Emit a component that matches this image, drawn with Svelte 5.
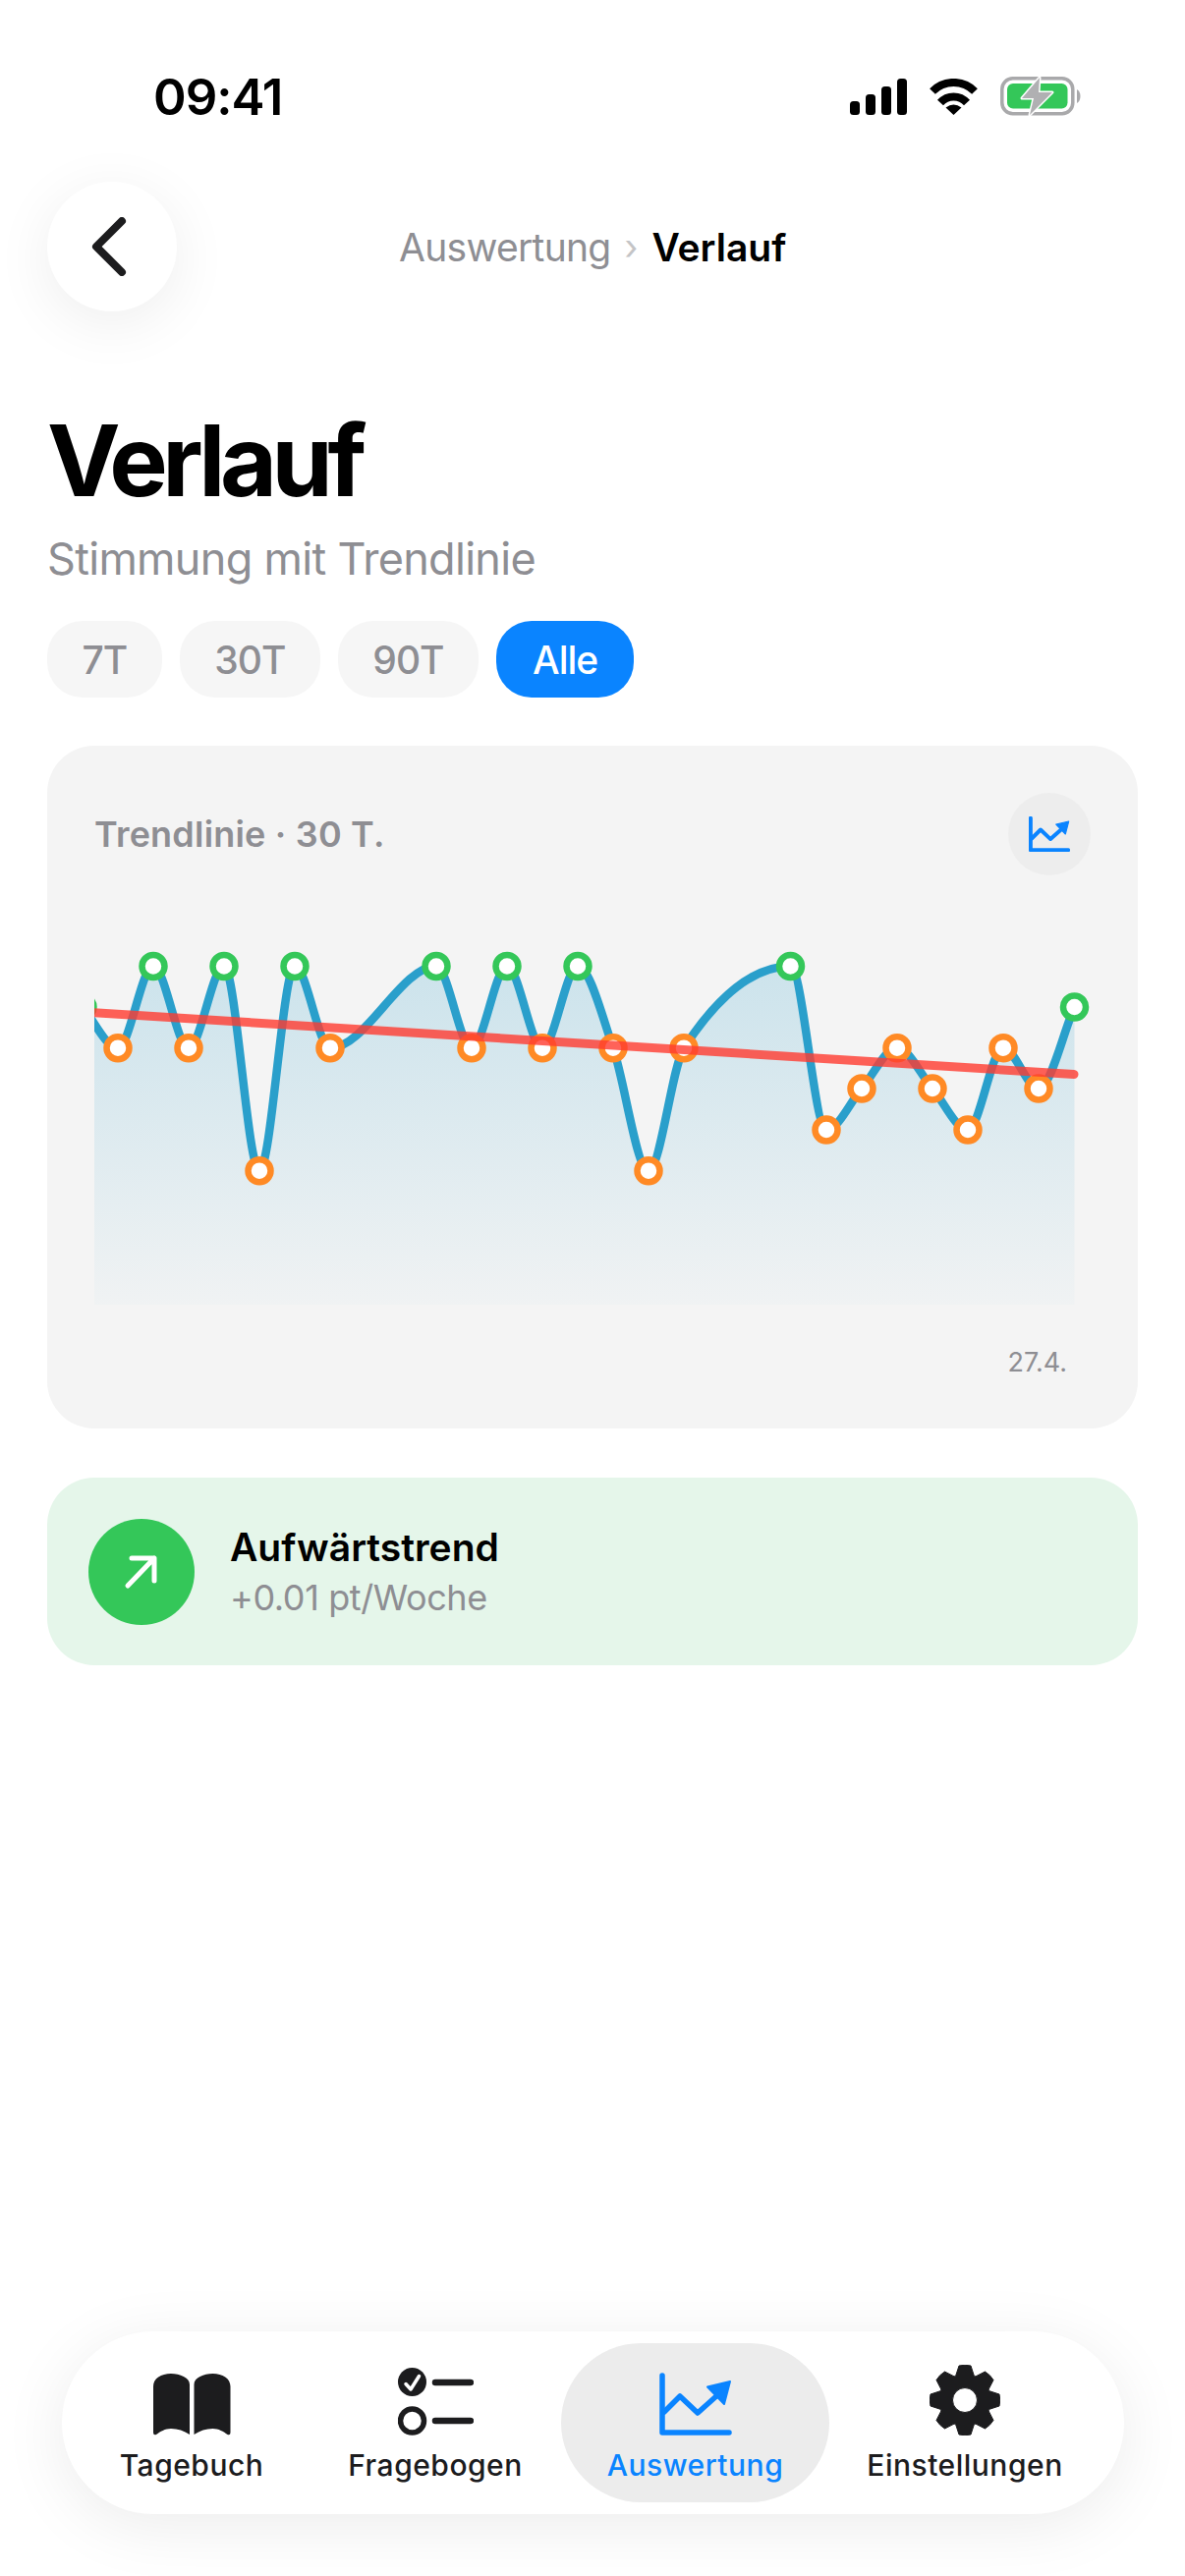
<script lang="ts">
	// chart values in page pixels, x is relative to the svg's left edge (96)
	const pts = [
		[-12, 1025], [24, 1066.7], [60, 983.5], [96, 1066.7], [132, 983.5], [168, 1191.7], [204, 983.5], [240, 1066.7],
		[348, 983.5], [384, 1066.7], [420, 983.5], [456, 1066.7], [492, 983.5], [528, 1066.7], [564, 1191.7], [600, 1066.7],
		[708.5, 983.5], [745, 1150], [781, 1108], [817, 1066.7], [853, 1108], [889, 1150], [925, 1066.7], [961, 1108], [997.5, 1025]
	].map(([x, y]) => ({ x, y: y - 950 }));

	function monotone(p: { x: number; y: number }[]) {
		const n = p.length;
		const sl: number[] = [];
		for (let i = 0; i < n - 1; i++) sl.push((p[i + 1].y - p[i].y) / (p[i + 1].x - p[i].x));
		const t = p.map((_, i) => {
			if (i === 0) return sl[0];
			if (i === n - 1) return sl[n - 2];
			if (sl[i - 1] * sl[i] <= 0) return 0;
			const h0 = p[i].x - p[i - 1].x;
			const h1 = p[i + 1].x - p[i].x;
			const m = (sl[i - 1] * h1 + sl[i] * h0) / (h0 + h1);
			return Math.sign(sl[i]) * Math.min(Math.abs(sl[i - 1]), Math.abs(sl[i]), Math.abs(m) / 2) * 2;
		});
		let d = `M${p[0].x} ${p[0].y}`;
		for (let i = 0; i < n - 1; i++) {
			const h = (p[i + 1].x - p[i].x) / 3;
			d += `C${p[i].x + h} ${p[i].y + t[i] * h} ${p[i + 1].x - h} ${p[i + 1].y - t[i + 1] * h} ${p[i + 1].x} ${p[i + 1].y}`;
		}
		return d;
	}

	const line = monotone(pts);
	const area = `${line}V378H-12Z`;

	function gear() {
		const teeth = 8;
		const c = 36;
		let d = '';
		for (let i = 0; i < teeth; i++) {
			const a = (i * Math.PI * 2) / teeth - Math.PI / 2;
			const at = (r: number, o: number) => `${(c + r * Math.cos(a + o)).toFixed(1)} ${(c + r * Math.sin(a + o)).toFixed(1)}`;
			d += `${i ? 'L' : 'M'}${at(26.5, -0.36)}L${at(35.5, -0.17)}Q${at(36.5, 0)} ${at(35.5, 0.17)}L${at(26.5, 0.36)}`;
		}
		return `${d}ZM36 23.5a12.5 12.5 0 1 0 0 25a12.5 12.5 0 1 0 0-25Z`;
	}

	const chips = ['7T', '30T', '90T', 'Alle'];
</script>

{#snippet chartIcon(sw: number)}
	<path d="M3 3V61H71" fill="none" stroke="currentColor" stroke-width={sw} stroke-linecap="round" stroke-linejoin="round" />
	<path d="M5 40L21 24L39 41L58 24" fill="none" stroke="currentColor" stroke-width={sw} stroke-linecap="round" stroke-linejoin="round" />
	<path d="M72 9L49 14.5L66 32Z" fill="currentColor" stroke="currentColor" stroke-width="2" stroke-linejoin="round" />
{/snippet}

<div class="page">
	<div class="status">
		<span class="time">09:41</span>
		<div class="status-icons">
			<svg width="58" height="37" viewBox="0 0 58 37">
				<rect x="0" y="23" width="10" height="14" rx="3.5" />
				<rect x="16" y="16" width="10" height="21" rx="3.5" />
				<rect x="32" y="8" width="10" height="29" rx="3.5" />
				<rect x="48" y="0" width="10" height="37" rx="3.5" />
			</svg>
			<svg width="49" height="37" viewBox="0 0 49 37">
				<path d="M3 13A30 30 0 0 1 46 13" fill="none" stroke="#000" stroke-width="8" />
				<path d="M11 24.5A18 18 0 0 1 38 24.5" fill="none" stroke="#000" stroke-width="8" />
				<path d="M24.5 37L16.5 29.5Q24.5 23.5 32.5 29.5Z" />
			</svg>
			<svg width="82" height="42" viewBox="0 0 82 42">
				<rect x="1.8" y="2.8" width="72" height="36" rx="11" fill="none" stroke="#a9a9ab" stroke-width="3.5" />
				<rect x="7" y="8" width="61.5" height="25.5" rx="6" fill="#34c759" />
				<path d="M78 14Q81.5 16 81.5 21Q81.5 26 78 28Z" fill="#a9a9ab" />
				<path d="M40 2L22 23H34L30 40L53 17H39Z" fill="#b0b0b2" stroke="#fff" stroke-width="3" stroke-linejoin="round" paint-order="stroke" />
			</svg>
		</div>
	</div>

	<div class="nav">
		<button class="back" aria-label="Zurück">
			<svg width="36" height="60" viewBox="0 0 36 60">
				<path d="M31 4L5 30L31 56" fill="none" stroke="#1c1c1e" stroke-width="8" stroke-linecap="round" stroke-linejoin="round" />
			</svg>
		</button>
		<div class="crumbs">
			<span class="crumb-parent">Auswertung</span>
			<span class="crumb-sep">›</span>
			<span class="crumb-current">Verlauf</span>
		</div>
	</div>

	<h1>Verlauf</h1>
	<p class="subtitle">Stimmung mit Trendlinie</p>

	<div class="chips">
		{#each chips as chip}
			<span class="chip" class:active={chip === 'Alle'}>{chip}</span>
		{/each}
	</div>

	<section class="card">
		<div class="card-head">
			<span class="card-title">Trendlinie · 30 T.</span>
			<span class="card-icon">
				<svg width="42" height="36" viewBox="0 0 74 64">{@render chartIcon(7)}</svg>
			</span>
		</div>
		<svg class="plot" width="1014" height="390" viewBox="0 0 1014 390">
			<defs>
				<linearGradient id="fade" gradientUnits="userSpaceOnUse" x1="0" y1="30" x2="0" y2="378">
					<stop offset="0" stop-color="#2a9fcb" stop-opacity="0.2" />
					<stop offset="1" stop-color="#2a9fcb" stop-opacity="0.02" />
				</linearGradient>
			</defs>
			<path d={area} fill="url(#fade)" />
			<path d={line} fill="none" stroke="#2a9fcb" stroke-width="8.5" stroke-linecap="round" />
			{#each pts as p}
				<circle cx={p.x} cy={p.y} r="11.5" fill="#fff" stroke={p.y <= 76 ? '#34c759' : '#ff8a25'} stroke-width="6.5" />
			{/each}
			<line x1="-12" y1="80" x2="997" y2="143.5" stroke="#ff3b30" stroke-opacity="0.8" stroke-width="9" stroke-linecap="round" />
		</svg>
		<div class="axis">27.4.</div>
	</section>

	<section class="trend">
		<span class="trend-badge">
			<svg width="36" height="36" viewBox="0 0 36 36">
				<path d="M4 32L31 4M8 4H31V27" fill="none" stroke="#fff" stroke-width="5" stroke-linecap="round" stroke-linejoin="round" />
			</svg>
		</span>
		<div>
			<div class="trend-title">Aufwärtstrend</div>
			<div class="trend-sub">+0.01 pt/Woche</div>
		</div>
	</section>

	<nav class="tabs">
		<div class="tab">
			<svg width="79" height="63" viewBox="0 0 79 63" fill="#1c1c1e">
				<path d="M0 13C0 5 8 0 18 0C27 0 37 4 37 11V62C31 58 25 56 18 56C12 56 7 59 3 62Q0 63 0 60Z" />
				<path d="M78.5 13C78.5 5 70.5 0 60.5 0C51.5 0 41.5 4 41.5 11V62C47.5 58 53.5 56 60.5 56C66.5 56 71.5 59 75.5 62Q78.5 63 78.5 60Z" />
			</svg>
			<span>Tagebuch</span>
		</div>
		<div class="tab">
			<svg width="77" height="69" viewBox="0 0 77 69">
				<circle cx="14.5" cy="14.5" r="14.5" fill="#1c1c1e" />
				<path d="M8 16.5L13 22L21.5 8.5" fill="none" stroke="#fff" stroke-width="3.5" stroke-linecap="round" stroke-linejoin="round" />
				<circle cx="14.5" cy="54" r="12" fill="none" stroke="#1c1c1e" stroke-width="5.5" />
				<path d="M38 15H74M38 54H74" stroke="#1c1c1e" stroke-width="6.5" stroke-linecap="round" />
			</svg>
			<span>Fragebogen</span>
		</div>
		<div class="tab selected">
			<svg width="74" height="64" viewBox="0 0 74 64">{@render chartIcon(5.5)}</svg>
			<span>Auswertung</span>
		</div>
		<div class="tab">
			<svg width="72" height="72" viewBox="0 0 72 72">
				<path d={gear()} fill="#1c1c1e" fill-rule="evenodd" stroke="#1c1c1e" stroke-width="1" stroke-linejoin="round" />
			</svg>
			<span>Einstellungen</span>
		</div>
	</nav>
</div>

<style>
	:global(body) {
		margin: 0;
		background: #fff;
	}

	.page {
		width: 1206px;
		height: 2622px;
		box-sizing: border-box;
		padding: 0 48px 63px;
		display: flex;
		flex-direction: column;
		font-family: Inter, 'Noto Sans', sans-serif;
		overflow: hidden;
	}

	.status {
		display: flex;
		justify-content: space-between;
		align-items: center;
		height: 42px;
		margin-top: 77px;
		padding: 0 58px 0 108px;
	}

	.time {
		font-size: 51px;
		font-weight: 600;
		color: #000;
		letter-spacing: -1px;
	}

	.status-icons {
		display: flex;
		align-items: center;
		gap: 23px;
	}

	.nav {
		display: flex;
		align-items: center;
		margin-top: 66px;
		height: 132px;
	}

	.back {
		width: 132px;
		height: 132px;
		border: none;
		padding: 0 6px 0 0;
		border-radius: 50%;
		background: #fff;
		box-shadow: 0 12px 60px rgba(0, 0, 0, 0.07);
		display: flex;
		align-items: center;
		justify-content: center;
	}

	.crumbs {
		margin-left: 226px;
		display: flex;
		align-items: center;
		gap: 14px;
		font-size: 39px;
	}

	.crumb-parent {
		color: #8e8e93;
		letter-spacing: -0.7px;
	}

	.crumb-sep {
		color: #c4c4c6;
		font-size: 36px;
	}

	.crumb-current {
		font-weight: 600;
		color: #000;
	}

	h1 {
		margin: 90px 0 0;
		font-size: 100px;
		line-height: 124px;
		font-weight: 700;
		letter-spacing: -5.4px;
		color: #000;
	}

	.subtitle {
		margin: 11px 0 0;
		font-size: 45px;
		line-height: 54px;
		letter-spacing: -0.7px;
		color: #8e8e93;
	}

	.chips {
		display: flex;
		gap: 18px;
		margin-top: 36px;
	}

	.chip {
		height: 78px;
		display: flex;
		align-items: center;
		padding: 0 35.5px;
		border-radius: 36px;
		background: #f6f6f6;
		color: #8e8e93;
		font-size: 39px;
		font-weight: 500;
		letter-spacing: -1px;
	}

	.chip.active {
		padding: 0 37px;
		background: #0a84ff;
		color: #fff;
	}

	.card {
		margin-top: 49px;
		height: 695px;
		box-sizing: border-box;
		padding: 48px;
		background: #f4f4f4;
		border-radius: 48px;
	}

	.card-head {
		display: flex;
		justify-content: space-between;
		align-items: center;
		height: 84px;
		margin-bottom: 59px;
	}

	.card-title {
		font-size: 36px;
		font-weight: 600;
		letter-spacing: 0.2px;
		color: #8e8e93;
	}

	.card-icon {
		width: 84px;
		height: 84px;
		border-radius: 50%;
		background: #ededed;
		color: #0a84ff;
		display: flex;
		align-items: center;
		justify-content: center;
	}

	.plot {
		display: block;
	}

	.axis {
		text-align: right;
		font-size: 27px;
		color: #8e8e93;
		padding-right: 24px;
		margin-top: 30px;
	}

	.trend {
		margin-top: 50px;
		height: 191px;
		box-sizing: border-box;
		padding: 0 42px;
		display: flex;
		align-items: center;
		gap: 36px;
		background: #e5f6ea;
		border-radius: 48px;
	}

	.trend-badge {
		width: 108px;
		height: 108px;
		border-radius: 50%;
		background: #34c759;
		display: flex;
		align-items: center;
		justify-content: center;
	}

	.trend-title {
		font-size: 39px;
		font-weight: 600;
		color: #000;
	}

	.trend-sub {
		font-size: 36px;
		letter-spacing: -0.4px;
		color: #8e8e93;
		margin-top: 6px;
	}

	.tabs {
		margin-top: auto;
		margin-left: 15px;
		width: 1081px;
		height: 186px;
		box-sizing: border-box;
		padding: 12px;
		display: grid;
		grid-template-columns: 240px 256px 273px 276px;
		background: #fff;
		border-radius: 93px;
		box-shadow: 0 12px 66px rgba(0, 0, 0, 0.08);
	}

	.tab {
		display: flex;
		flex-direction: column;
		align-items: center;
		justify-content: flex-end;
		border-radius: 81px;
		font-size: 30px;
		font-weight: 500;
		letter-spacing: 0.5px;
		color: #1c1c1e;
		padding-bottom: 20px;
		gap: 12px;
	}

	.tab.selected {
		background: #ececec;
		color: #0a84ff;
	}
</style>
